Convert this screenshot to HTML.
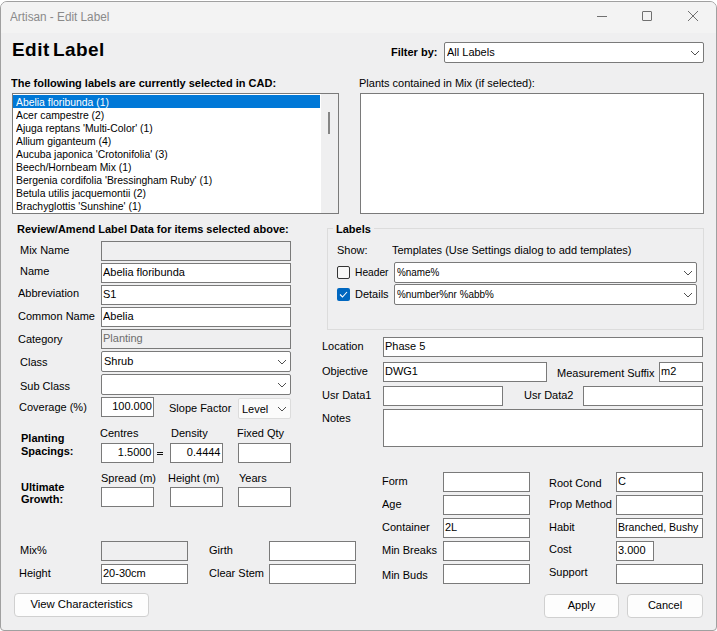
<!DOCTYPE html>
<html><head><meta charset="utf-8"><style>
html,body{margin:0;padding:0;width:717px;height:631px;overflow:hidden;background:#fff}
.win{position:absolute;left:0;top:1px;width:717px;height:630px;background:#efeff0;border:1px solid #a0a0a0;box-sizing:border-box;border-radius:7px 7px 4px 4px;overflow:hidden}
.tb{position:absolute;left:0;top:0;width:100%;height:31px;background:#f3f3f3}
.t{position:absolute;white-space:pre;font-family:"Liberation Sans", sans-serif}
.b{position:absolute;box-sizing:border-box}
</style></head><body>
<div class="win"><div class="tb"></div></div>
<div class="t" style="left:10px;top:10.84px;font-size:12.00px;line-height:12.00px;color:#8a8a8a;transform:scaleX(0.9800);transform-origin:0 0;">Artisan - Edit Label</div>
<div class="b" style="left:597px;top:16px;width:10px;height:1px;background:#707070"></div>
<div class="b" style="left:642px;top:11px;width:10px;height:10px;border:1px solid #707070;box-sizing:border-box;border-radius:1px"></div>
<svg class="b" style="left:687px;top:10px" width="12" height="12"><path d="M1 1 L11 11 M11 1 L1 11" stroke="#707070" stroke-width="1"/></svg>
<div class="t" style="left:12px;top:40.22px;font-size:19.00px;line-height:19.00px;color:#000;font-weight:bold;word-spacing:-2.5px;letter-spacing:0.45px">Edit Label</div>
<div class="t" style="left:391px;top:46.00px;font-size:11.60px;line-height:11.60px;color:#000;font-weight:bold;transform:scaleX(0.9479);transform-origin:0 0;">Filter by:</div>
<div class="b" style="left:444px;top:42px;width:260px;height:21px;background:#fff;border:1px solid #7a7a7a;border-radius:2px"></div>
<div class="t" style="left:447px;top:46.00px;font-size:11.60px;line-height:11.60px;color:#000;transform:scaleX(0.9479);transform-origin:0 0;">All Labels</div>
<svg class="b" style="left:690.0px;top:49.5px" width="10" height="6"><path d="M1 1 L5.0 5 L9 1" fill="none" stroke="#505050" stroke-width="1"/></svg>
<div class="t" style="left:11px;top:77.00px;font-size:11.60px;line-height:11.60px;color:#000;font-weight:bold;transform:scaleX(0.9479);transform-origin:0 0;">The following labels are currently selected in CAD:</div>
<div class="t" style="left:359px;top:77.00px;font-size:11.60px;line-height:11.60px;color:#000;transform:scaleX(0.9479);transform-origin:0 0;">Plants contained in Mix (if selected):</div>
<div class="b" style="left:12px;top:93px;width:327px;height:121px;background:#fff;border:1px solid #7a7a7a;"></div>
<div class="b" style="left:13px;top:95px;width:307px;height:13px;background:#0078d7"></div>
<div class="b" style="left:321px;top:94px;width:17px;height:119px;background:#efeff0"></div>
<div class="b" style="left:328px;top:112px;width:2px;height:22px;background:#858585"></div>
<div class="t" style="left:16px;top:96.00px;font-size:11.60px;line-height:11.60px;color:#fff;transform:scaleX(0.8957);transform-origin:0 0;">Abelia floribunda (1)</div>
<div class="t" style="left:16px;top:109.00px;font-size:11.60px;line-height:11.60px;color:#000;transform:scaleX(0.8957);transform-origin:0 0;">Acer campestre (2)</div>
<div class="t" style="left:16px;top:122.00px;font-size:11.60px;line-height:11.60px;color:#000;transform:scaleX(0.8957);transform-origin:0 0;">Ajuga reptans 'Multi-Color' (1)</div>
<div class="t" style="left:16px;top:135.00px;font-size:11.60px;line-height:11.60px;color:#000;transform:scaleX(0.8957);transform-origin:0 0;">Allium giganteum (4)</div>
<div class="t" style="left:16px;top:148.00px;font-size:11.60px;line-height:11.60px;color:#000;transform:scaleX(0.8957);transform-origin:0 0;">Aucuba japonica 'Crotonifolia' (3)</div>
<div class="t" style="left:16px;top:161.00px;font-size:11.60px;line-height:11.60px;color:#000;transform:scaleX(0.8957);transform-origin:0 0;">Beech/Hornbeam Mix (1)</div>
<div class="t" style="left:16px;top:174.00px;font-size:11.60px;line-height:11.60px;color:#000;transform:scaleX(0.8957);transform-origin:0 0;">Bergenia cordifolia 'Bressingham Ruby' (1)</div>
<div class="t" style="left:16px;top:187.00px;font-size:11.60px;line-height:11.60px;color:#000;transform:scaleX(0.8957);transform-origin:0 0;">Betula utilis jacquemontii (2)</div>
<div class="t" style="left:16px;top:200.00px;font-size:11.60px;line-height:11.60px;color:#000;transform:scaleX(0.8957);transform-origin:0 0;">Brachyglottis 'Sunshine' (1)</div>
<div class="b" style="left:360px;top:93px;width:344px;height:121px;background:#fff;border:1px solid #7a7a7a;"></div>
<div class="t" style="left:17px;top:223.00px;font-size:11.60px;line-height:11.60px;color:#000;font-weight:bold;transform:scaleX(0.9479);transform-origin:0 0;">Review/Amend Label Data for items selected above:</div>
<div class="t" style="left:20px;top:244.00px;font-size:11.60px;line-height:11.60px;color:#000;transform:scaleX(0.9479);transform-origin:0 0;">Mix Name</div>
<div class="b" style="left:101px;top:241px;width:190px;height:20px;background:#efeff0;border:1px solid #7a7a7a;"></div>
<div class="t" style="left:20px;top:265.00px;font-size:11.60px;line-height:11.60px;color:#000;transform:scaleX(0.9479);transform-origin:0 0;">Name</div>
<div class="b" style="left:101px;top:263px;width:190px;height:20px;background:#fff;border:1px solid #7a7a7a;"></div>
<div class="t" style="left:103px;top:266.00px;font-size:11.60px;line-height:11.60px;color:#000;transform:scaleX(0.9479);transform-origin:0 0;">Abelia floribunda</div>
<div class="t" style="left:18px;top:287.00px;font-size:11.60px;line-height:11.60px;color:#000;transform:scaleX(0.9479);transform-origin:0 0;">Abbreviation</div>
<div class="b" style="left:101px;top:285px;width:190px;height:20px;background:#fff;border:1px solid #7a7a7a;"></div>
<div class="t" style="left:103px;top:288.00px;font-size:11.60px;line-height:11.60px;color:#000;transform:scaleX(0.9479);transform-origin:0 0;">S1</div>
<div class="t" style="left:18px;top:310.00px;font-size:11.60px;line-height:11.60px;color:#000;transform:scaleX(0.9479);transform-origin:0 0;">Common Name</div>
<div class="b" style="left:101px;top:307px;width:190px;height:20px;background:#fff;border:1px solid #7a7a7a;"></div>
<div class="t" style="left:103px;top:310.00px;font-size:11.60px;line-height:11.60px;color:#000;transform:scaleX(0.9479);transform-origin:0 0;">Abelia</div>
<div class="t" style="left:18px;top:333.00px;font-size:11.60px;line-height:11.60px;color:#000;transform:scaleX(0.9479);transform-origin:0 0;">Category</div>
<div class="b" style="left:101px;top:329px;width:190px;height:20px;background:#efeff0;border:1px solid #7a7a7a;"></div>
<div class="t" style="left:103px;top:332.00px;font-size:11.60px;line-height:11.60px;color:#6d6d6d;transform:scaleX(0.9479);transform-origin:0 0;">Planting</div>
<div class="t" style="left:20px;top:356.00px;font-size:11.60px;line-height:11.60px;color:#000;transform:scaleX(0.9479);transform-origin:0 0;">Class</div>
<div class="b" style="left:101px;top:351px;width:190px;height:21px;background:#fff;border:1px solid #7a7a7a;border-radius:2px"></div>
<div class="t" style="left:104px;top:355.00px;font-size:11.60px;line-height:11.60px;color:#000;transform:scaleX(0.9479);transform-origin:0 0;">Shrub</div>
<svg class="b" style="left:277.0px;top:358.5px" width="10" height="6"><path d="M1 1 L5.0 5 L9 1" fill="none" stroke="#505050" stroke-width="1"/></svg>
<div class="t" style="left:20px;top:380.00px;font-size:11.60px;line-height:11.60px;color:#000;transform:scaleX(0.9479);transform-origin:0 0;">Sub Class</div>
<div class="b" style="left:101px;top:374px;width:190px;height:21px;background:#fff;border:1px solid #7a7a7a;border-radius:2px"></div>
<svg class="b" style="left:277.0px;top:381.5px" width="10" height="6"><path d="M1 1 L5.0 5 L9 1" fill="none" stroke="#505050" stroke-width="1"/></svg>
<div class="t" style="left:19px;top:401.00px;font-size:11.60px;line-height:11.60px;color:#000;transform:scaleX(0.9479);transform-origin:0 0;">Coverage (%)</div>
<div class="b" style="left:101px;top:397px;width:53px;height:20px;background:#fff;border:1px solid #7a7a7a;"></div>
<div class="t" style="right:565.5px;top:400.00px;font-size:11.60px;line-height:11.60px;color:#000;transform:scaleX(0.9479);transform-origin:100% 0;">100.000</div>
<div class="t" style="left:169px;top:402.00px;font-size:11.60px;line-height:11.60px;color:#000;transform:scaleX(0.9479);transform-origin:0 0;">Slope Factor</div>
<div class="b" style="left:238px;top:398px;width:53px;height:21px;background:#fbfbfb;border:1px solid #dcdcdc;border-radius:2px"></div>
<div class="t" style="left:241px;top:402.00px;font-size:11.60px;line-height:11.60px;color:#000;transform:scaleX(0.9479);transform-origin:0 0;margin-top:0.6px;margin-left:0.5px">Level</div>
<svg class="b" style="left:277.0px;top:405.5px" width="10" height="6"><path d="M1 1 L5.0 5 L9 1" fill="none" stroke="#505050" stroke-width="1"/></svg>
<div class="t" style="left:21px;top:432.00px;font-size:11.60px;line-height:11.60px;color:#000;font-weight:bold;transform:scaleX(0.9479);transform-origin:0 0;">Planting</div>
<div class="t" style="left:21px;top:445.00px;font-size:11.60px;line-height:11.60px;color:#000;font-weight:bold;transform:scaleX(0.9479);transform-origin:0 0;">Spacings:</div>
<div class="t" style="left:100px;top:427.00px;font-size:11.60px;line-height:11.60px;color:#000;transform:scaleX(0.9479);transform-origin:0 0;">Centres</div>
<div class="t" style="left:171px;top:427.00px;font-size:11.60px;line-height:11.60px;color:#000;transform:scaleX(0.9479);transform-origin:0 0;">Density</div>
<div class="t" style="left:237px;top:427.00px;font-size:11.60px;line-height:11.60px;color:#000;transform:scaleX(0.9479);transform-origin:0 0;">Fixed Qty</div>
<div class="b" style="left:101px;top:443px;width:53px;height:20px;background:#fff;border:1px solid #7a7a7a;"></div>
<div class="t" style="right:565.5px;top:446.00px;font-size:11.60px;line-height:11.60px;color:#000;transform:scaleX(0.9479);transform-origin:100% 0;">1.5000</div>
<div class="b" style="left:157px;top:452px;width:6px;height:1px;background:#111"></div><div class="b" style="left:157px;top:454px;width:6px;height:1px;background:#111"></div>
<div class="b" style="left:170px;top:443px;width:53px;height:20px;background:#fff;border:1px solid #7a7a7a;"></div>
<div class="t" style="right:496.5px;top:446.00px;font-size:11.60px;line-height:11.60px;color:#000;transform:scaleX(0.9479);transform-origin:100% 0;">0.4444</div>
<div class="b" style="left:238px;top:443px;width:53px;height:20px;background:#fff;border:1px solid #7a7a7a;"></div>
<div class="t" style="left:21px;top:481.00px;font-size:11.60px;line-height:11.60px;color:#000;font-weight:bold;transform:scaleX(0.9479);transform-origin:0 0;">Ultimate</div>
<div class="t" style="left:21px;top:493.00px;font-size:11.60px;line-height:11.60px;color:#000;font-weight:bold;transform:scaleX(0.9479);transform-origin:0 0;">Growth:</div>
<div class="t" style="left:101px;top:472.00px;font-size:11.60px;line-height:11.60px;color:#000;transform:scaleX(0.9479);transform-origin:0 0;">Spread (m)</div>
<div class="t" style="left:168px;top:472.00px;font-size:11.60px;line-height:11.60px;color:#000;transform:scaleX(0.9479);transform-origin:0 0;">Height (m)</div>
<div class="t" style="left:239px;top:472.00px;font-size:11.60px;line-height:11.60px;color:#000;transform:scaleX(0.9479);transform-origin:0 0;">Years</div>
<div class="b" style="left:101px;top:487px;width:53px;height:20px;background:#fff;border:1px solid #7a7a7a;"></div>
<div class="b" style="left:170px;top:487px;width:53px;height:20px;background:#fff;border:1px solid #7a7a7a;"></div>
<div class="b" style="left:238px;top:487px;width:53px;height:20px;background:#fff;border:1px solid #7a7a7a;"></div>
<div class="t" style="left:20px;top:544.00px;font-size:11.60px;line-height:11.60px;color:#000;transform:scaleX(0.9479);transform-origin:0 0;">Mix%</div>
<div class="b" style="left:101px;top:541px;width:87px;height:20px;background:#efeff0;border:1px solid #7a7a7a;"></div>
<div class="t" style="left:19px;top:567.00px;font-size:11.60px;line-height:11.60px;color:#000;transform:scaleX(0.9479);transform-origin:0 0;">Height</div>
<div class="b" style="left:101px;top:564px;width:87px;height:20px;background:#fff;border:1px solid #7a7a7a;"></div>
<div class="t" style="left:103px;top:567.00px;font-size:11.60px;line-height:11.60px;color:#000;transform:scaleX(0.9479);transform-origin:0 0;">20-30cm</div>
<div class="t" style="left:209px;top:544.00px;font-size:11.60px;line-height:11.60px;color:#000;transform:scaleX(0.9479);transform-origin:0 0;">Girth</div>
<div class="b" style="left:269px;top:541px;width:87px;height:20px;background:#fff;border:1px solid #7a7a7a;"></div>
<div class="t" style="left:209px;top:567.00px;font-size:11.60px;line-height:11.60px;color:#000;transform:scaleX(0.9479);transform-origin:0 0;">Clear Stem</div>
<div class="b" style="left:269px;top:564px;width:87px;height:20px;background:#fff;border:1px solid #7a7a7a;"></div>
<div class="b" style="left:14px;top:593px;width:135px;height:24px;background:#fdfdfd;border:1px solid #d0d0d0;border-radius:4px;box-sizing:border-box"></div>
<div class="t" style="left:14px;width:135px;text-align:center;top:599.23px;font-size:11.3px;line-height:11.3px">View Characteristics</div>
<div class="b" style="left:327px;top:228px;width:377px;height:102px;border:1px solid #dcdcdc;box-sizing:border-box"></div>
<div class="b" style="left:333px;top:222px;width:41px;height:14px;background:#efeff0"></div>
<div class="t" style="left:336px;top:223.00px;font-size:11.60px;line-height:11.60px;color:#000;font-weight:bold;transform:scaleX(0.9479);transform-origin:0 0;">Labels</div>
<div class="t" style="left:337px;top:244.00px;font-size:11.60px;line-height:11.60px;color:#000;transform:scaleX(0.9479);transform-origin:0 0;">Show:</div>
<div class="t" style="left:392px;top:244.00px;font-size:11.60px;line-height:11.60px;color:#000;transform:scaleX(0.9479);transform-origin:0 0;">Templates (Use Settings dialog to add templates)</div>
<div class="b" style="left:337px;top:266px;width:13px;height:13px;border:1px solid #333;border-radius:2px;box-sizing:border-box;background:#f7f7f7"></div>
<div class="t" style="left:355px;top:266.00px;font-size:11.60px;line-height:11.60px;color:#000;transform:scaleX(0.8815);transform-origin:0 0;">Header</div>
<div class="b" style="left:394px;top:262px;width:303px;height:21px;background:#fff;border:1px solid #7a7a7a;border-radius:2px"></div>
<div class="t" style="left:397px;top:266.00px;font-size:11.60px;line-height:11.60px;color:#000;transform:scaleX(0.8531);transform-origin:0 0;">%name%</div>
<svg class="b" style="left:683.0px;top:269.5px" width="10" height="6"><path d="M1 1 L5.0 5 L9 1" fill="none" stroke="#505050" stroke-width="1"/></svg>
<div class="b" style="left:337px;top:288px;width:13px;height:13px;border-radius:2px;background:#0067c0"></div>
<svg class="b" style="left:337px;top:288px" width="13" height="13"><path d="M3 6.5 L5.5 9 L10 4" fill="none" stroke="#fff" stroke-width="1.1"/></svg>
<div class="t" style="left:355px;top:288.00px;font-size:11.60px;line-height:11.60px;color:#000;transform:scaleX(0.9479);transform-origin:0 0;">Details</div>
<div class="b" style="left:394px;top:284px;width:303px;height:21px;background:#fff;border:1px solid #7a7a7a;border-radius:2px"></div>
<div class="t" style="left:397px;top:288.00px;font-size:11.60px;line-height:11.60px;color:#000;transform:scaleX(0.8531);transform-origin:0 0;">%number%nr %abb%</div>
<svg class="b" style="left:683.0px;top:291.5px" width="10" height="6"><path d="M1 1 L5.0 5 L9 1" fill="none" stroke="#505050" stroke-width="1"/></svg>
<div class="t" style="left:322px;top:340.00px;font-size:11.60px;line-height:11.60px;color:#000;transform:scaleX(0.9479);transform-origin:0 0;">Location</div>
<div class="b" style="left:383px;top:337px;width:320px;height:20px;background:#fff;border:1px solid #7a7a7a;"></div>
<div class="t" style="left:385px;top:340.00px;font-size:11.60px;line-height:11.60px;color:#000;transform:scaleX(0.9479);transform-origin:0 0;">Phase 5</div>
<div class="t" style="left:322px;top:365.00px;font-size:11.60px;line-height:11.60px;color:#000;transform:scaleX(0.9479);transform-origin:0 0;">Objective</div>
<div class="b" style="left:383px;top:362px;width:164px;height:20px;background:#fff;border:1px solid #7a7a7a;"></div>
<div class="t" style="left:385px;top:365.00px;font-size:11.60px;line-height:11.60px;color:#000;transform:scaleX(0.9479);transform-origin:0 0;">DWG1</div>
<div class="t" style="left:557px;top:367.00px;font-size:11.60px;line-height:11.60px;color:#000;transform:scaleX(0.9479);transform-origin:0 0;">Measurement Suffix</div>
<div class="b" style="left:659px;top:362px;width:44px;height:20px;background:#fff;border:1px solid #7a7a7a;"></div>
<div class="t" style="left:661px;top:365.00px;font-size:11.60px;line-height:11.60px;color:#000;transform:scaleX(0.9479);transform-origin:0 0;">m2</div>
<div class="t" style="left:322px;top:389.00px;font-size:11.60px;line-height:11.60px;color:#000;transform:scaleX(0.9479);transform-origin:0 0;">Usr Data1</div>
<div class="b" style="left:383px;top:386px;width:120px;height:20px;background:#fff;border:1px solid #7a7a7a;"></div>
<div class="t" style="left:524px;top:389.00px;font-size:11.60px;line-height:11.60px;color:#000;transform:scaleX(0.9479);transform-origin:0 0;">Usr Data2</div>
<div class="b" style="left:583px;top:386px;width:120px;height:20px;background:#fff;border:1px solid #7a7a7a;"></div>
<div class="t" style="left:322px;top:412.00px;font-size:11.60px;line-height:11.60px;color:#000;transform:scaleX(0.9479);transform-origin:0 0;">Notes</div>
<div class="b" style="left:383px;top:409px;width:320px;height:38px;background:#fff;border:1px solid #7a7a7a;"></div>
<div class="t" style="left:382px;top:475.00px;font-size:11.60px;line-height:11.60px;color:#000;transform:scaleX(0.9479);transform-origin:0 0;">Form</div>
<div class="b" style="left:443px;top:472px;width:87px;height:20px;background:#fff;border:1px solid #7a7a7a;"></div>
<div class="t" style="left:382px;top:498.00px;font-size:11.60px;line-height:11.60px;color:#000;transform:scaleX(0.9479);transform-origin:0 0;">Age</div>
<div class="b" style="left:443px;top:495px;width:87px;height:20px;background:#fff;border:1px solid #7a7a7a;"></div>
<div class="t" style="left:382px;top:521.00px;font-size:11.60px;line-height:11.60px;color:#000;transform:scaleX(0.9479);transform-origin:0 0;">Container</div>
<div class="b" style="left:443px;top:518px;width:87px;height:20px;background:#fff;border:1px solid #7a7a7a;"></div>
<div class="t" style="left:445px;top:521.00px;font-size:11.60px;line-height:11.60px;color:#000;transform:scaleX(0.9479);transform-origin:0 0;">2L</div>
<div class="t" style="left:382px;top:544.00px;font-size:11.60px;line-height:11.60px;color:#000;transform:scaleX(0.9479);transform-origin:0 0;">Min Breaks</div>
<div class="b" style="left:443px;top:541px;width:87px;height:20px;background:#fff;border:1px solid #7a7a7a;"></div>
<div class="t" style="left:382px;top:569.00px;font-size:11.60px;line-height:11.60px;color:#000;transform:scaleX(0.9479);transform-origin:0 0;">Min Buds</div>
<div class="b" style="left:443px;top:564px;width:87px;height:20px;background:#fff;border:1px solid #7a7a7a;"></div>
<div class="t" style="left:549px;top:477.00px;font-size:11.60px;line-height:11.60px;color:#000;transform:scaleX(0.9479);transform-origin:0 0;">Root Cond</div>
<div class="b" style="left:616px;top:472px;width:87px;height:20px;background:#fff;border:1px solid #7a7a7a;"></div>
<div class="t" style="left:618px;top:475.00px;font-size:11.60px;line-height:11.60px;color:#000;transform:scaleX(0.9479);transform-origin:0 0;">C</div>
<div class="t" style="left:549px;top:498.00px;font-size:11.60px;line-height:11.60px;color:#000;transform:scaleX(0.9479);transform-origin:0 0;">Prop Method</div>
<div class="b" style="left:616px;top:495px;width:87px;height:20px;background:#fff;border:1px solid #7a7a7a;"></div>
<div class="t" style="left:549px;top:521.00px;font-size:11.60px;line-height:11.60px;color:#000;transform:scaleX(0.9479);transform-origin:0 0;">Habit</div>
<div class="b" style="left:616px;top:518px;width:87px;height:20px;background:#fff;border:1px solid #7a7a7a;"></div>
<div class="t" style="left:618px;top:521.00px;font-size:11.60px;line-height:11.60px;color:#000;transform:scaleX(0.9100);transform-origin:0 0;">Branched, Bushy</div>
<div class="t" style="left:549px;top:543.00px;font-size:11.60px;line-height:11.60px;color:#000;transform:scaleX(0.9479);transform-origin:0 0;">Cost</div>
<div class="b" style="left:616px;top:541px;width:38px;height:20px;background:#fff;border:1px solid #7a7a7a;"></div>
<div class="t" style="left:618px;top:544.00px;font-size:11.60px;line-height:11.60px;color:#000;transform:scaleX(0.9479);transform-origin:0 0;">3.000</div>
<div class="t" style="left:549px;top:566.00px;font-size:11.60px;line-height:11.60px;color:#000;transform:scaleX(0.9479);transform-origin:0 0;">Support</div>
<div class="b" style="left:616px;top:564px;width:87px;height:20px;background:#fff;border:1px solid #7a7a7a;"></div>
<div class="b" style="left:544px;top:594px;width:75px;height:24px;background:#fdfdfd;border:1px solid #d0d0d0;border-radius:4px;box-sizing:border-box"></div>
<div class="t" style="left:544px;width:75px;text-align:center;top:600.19px;font-size:11px;line-height:11px">Apply</div>
<div class="b" style="left:627px;top:594px;width:76px;height:24px;background:#fdfdfd;border:1px solid #d0d0d0;border-radius:4px;box-sizing:border-box"></div>
<div class="t" style="left:627px;width:76px;text-align:center;top:600.19px;font-size:11px;line-height:11px">Cancel</div>
</body></html>
